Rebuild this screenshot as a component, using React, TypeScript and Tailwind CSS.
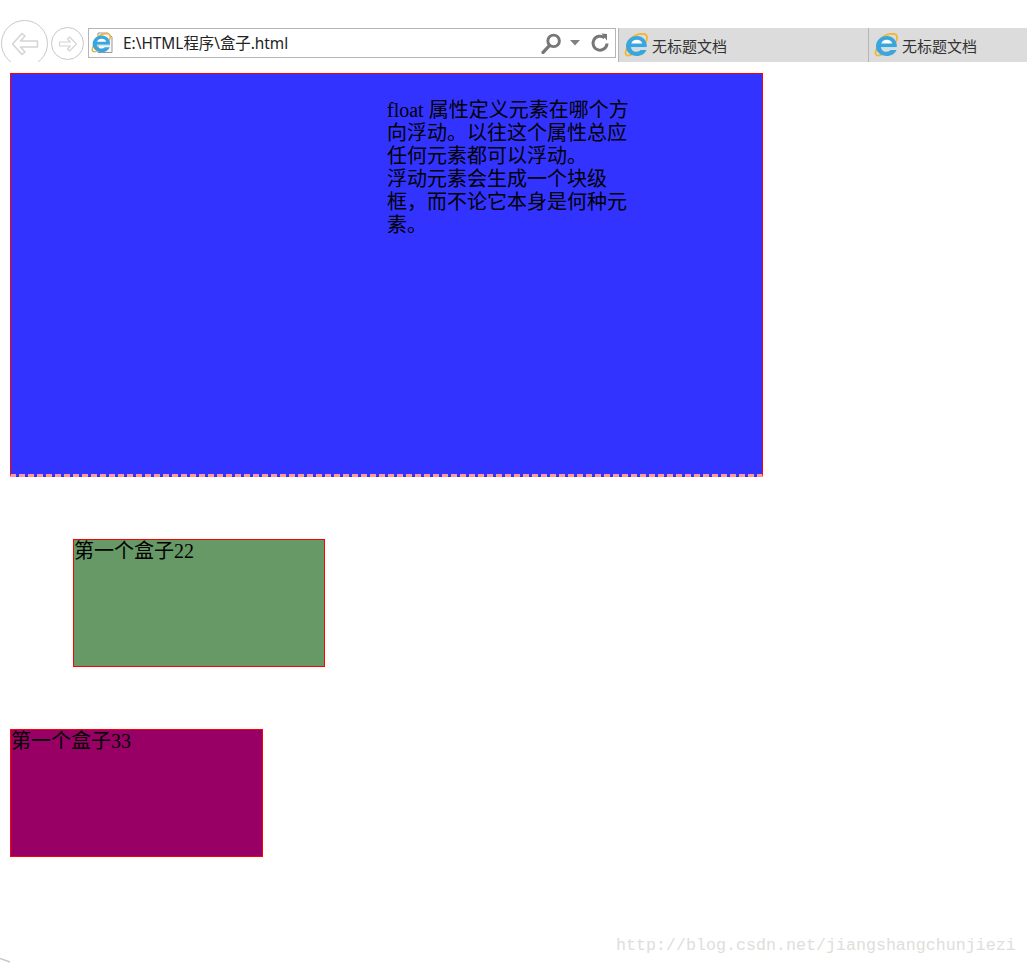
import React from "react";

const IeLogo = ({ size = 24 }: { size?: number }) => (
  <svg width={size} height={size} viewBox="0 0 24 24" fill="none">
    <path d="M2.500 16C0.500 21 1.500 24 7 21.800" stroke="#f2b632" strokeWidth="1.800" strokeLinecap="round" />
    <path d="M6 6.500C11 1.500 17 0.500 20.500 1C23.500 1.500 23.500 5 22 8.500" stroke="#f2b632" strokeWidth="1.800" strokeLinecap="round" />
    <path d="M7 14H22.800C23.500 7.500 18.500 3 13 3C6.800 3 2 7.500 2 13.200C2 19 6.800 23 12.800 23C17.300 23 21 20.800 22.500 17H16.500C15.300 19 10.500 19.500 8.300 17.200C7.500 16.300 7.100 15.200 7 14Z" fill="#3ba5dd" />
    <path d="M7.300 10.500C7.800 8.300 10 6.800 12.800 6.800C15.600 6.800 17.700 8.300 18.200 10.500Z" fill="#ffffff" />
    <path d="M7 14H22.800V15.200H7.300Z" fill="#b9e2f5" />
  </svg>
);

const Tab = ({ width }: { width: string }) => (
  <div className={`${width} h-full flex items-center pl-[5px] border-l border-[#b5b5b5] bg-[#dcdcdc]`}>
    <IeLogo />
    <span className="ml-[4px] mt-[1px] text-[15px] leading-none text-[#333333] font-['Noto_Sans_CJK_SC',sans-serif]">无标题文档</span>
  </div>
);

export default function App() {
  return (
    <div className="relative w-[1027px] h-[965px] overflow-hidden bg-white text-black font-['Liberation_Serif','Noto_Sans_CJK_SC',serif]">
      {/* browser chrome */}
      <div className="h-[63px] pt-[20px] flex">
        <div className="h-[42px] overflow-hidden shrink-0 ml-[1px]">
          <div className="w-[47px] h-[47px] rounded-full border border-[#c8c8c8] flex items-center justify-center">
            <svg width="30" height="26" viewBox="0 0 30 26" fill="none">
              <path d="M12 2.500L2.500 13L12 23.500L15 21L10.500 16H27.500V10H10.500L15 5Z" stroke="#d4d4d4" strokeWidth="1.500" strokeLinejoin="round" />
            </svg>
          </div>
        </div>
        <div className="w-[33px] h-[33px] ml-[3px] mt-[7px] shrink-0 rounded-full border border-[#c8c8c8] flex items-center justify-center">
          <svg width="20" height="18" viewBox="0 0 20 18" fill="none">
            <path d="M11.500 2L18.500 9L11.500 16L9.500 14L12.300 11H1.500V7H12.300L9.500 4Z" stroke="#d4d4d4" strokeWidth="1.200" strokeLinejoin="round" />
          </svg>
        </div>
        <div className="w-[528px] h-[30px] ml-[4px] mt-[8px] shrink-0 flex items-center border border-[#b5b5b5] bg-white">
          <div className="ml-[3px] relative w-[22px] h-[22px] shrink-0">
            <svg width="22" height="22" viewBox="0 0 22 22" fill="none" className="absolute inset-0">
              <path d="M6 1H16L20 5V20.500H6Z" fill="#f7f7f7" stroke="#9a9a9a" />
            </svg>
            <div className="absolute left-[-1px] top-[1px]">
              <IeLogo size={20} />
            </div>
          </div>
          <span className="ml-[9px] mt-[1px] text-[15.400px] leading-none text-[#222222] font-['Noto_Sans','Noto_Sans_CJK_SC',sans-serif]">E:\HTML程序\盒子.html</span>
          <div className="ml-auto flex items-center">
            <svg width="21" height="21" viewBox="0 0 20 20" fill="none">
              <circle cx="12" cy="7.500" r="5.500" stroke="#777777" strokeWidth="2.800" />
              <path d="M8 12L2 18.500" stroke="#777777" strokeWidth="3.200" strokeLinecap="round" />
            </svg>
            <svg width="10" height="6" viewBox="0 0 10 6" className="ml-[8px] mr-[10px]">
              <path d="M0 0H10L5 5.500Z" fill="#808080" />
            </svg>
            <svg width="20" height="20" viewBox="0 0 20 20" fill="none" className="mr-[5px]">
              <path d="M14.500 4.800A7 7 0 1 0 17 10.500" stroke="#777777" strokeWidth="3" />
              <path d="M11.500 0.500L17 1V7.500Z" fill="#777777" />
            </svg>
          </div>
        </div>
        <div className="ml-[2px] mt-[8px] h-[34px] flex flex-1">
          <Tab width="w-[250px]" />
          <Tab width="flex-1" />
        </div>
      </div>

      {/* page boxes */}
      <div className="ml-[10px] mt-[10px] w-[753px] h-[404px] pl-[376px] pt-[25px] border border-b-[3px] border-[#ff0000] border-b-[#ff9999] [border-bottom-style:dashed] bg-[#3333ff]">
        <div className="w-[242px] text-[20px] leading-[23.100px]">
          float 属性定义元素在哪个方向浮动。以往这个属性总应
          <br />
          任何元素都可以浮动。
          <br />
          浮动元素会生成一个块级框，而不论它本身是何种元素。
        </div>
      </div>

      <div className="ml-[73px] mt-[62px] w-[252px] h-[128px] border border-[#ff0000] bg-[#669966] text-[20px] leading-[23px]">
        第一个盒子22
      </div>

      <div className="ml-[10px] mt-[62px] w-[253px] h-[128px] border border-[#ff0000] bg-[#990066] text-[20px] leading-[23px]">
        第一个盒子33
      </div>

      {/* watermark */}
      <div className="absolute left-[616px] top-[935px] text-[16.670px] leading-[22px] text-[#dededa] font-['Liberation_Mono',monospace] whitespace-nowrap">
        http://blog.csdn.net/jiangshangchunjiezi
      </div>

      {/* corner of the cropped watermark arc */}
      <svg width="12" height="8" viewBox="0 0 12 8" fill="none" className="absolute left-0 bottom-0">
        <path d="M0 1.500L10 5" stroke="#c8c8c8" strokeWidth="1.500" />
      </svg>
    </div>
  );
}
